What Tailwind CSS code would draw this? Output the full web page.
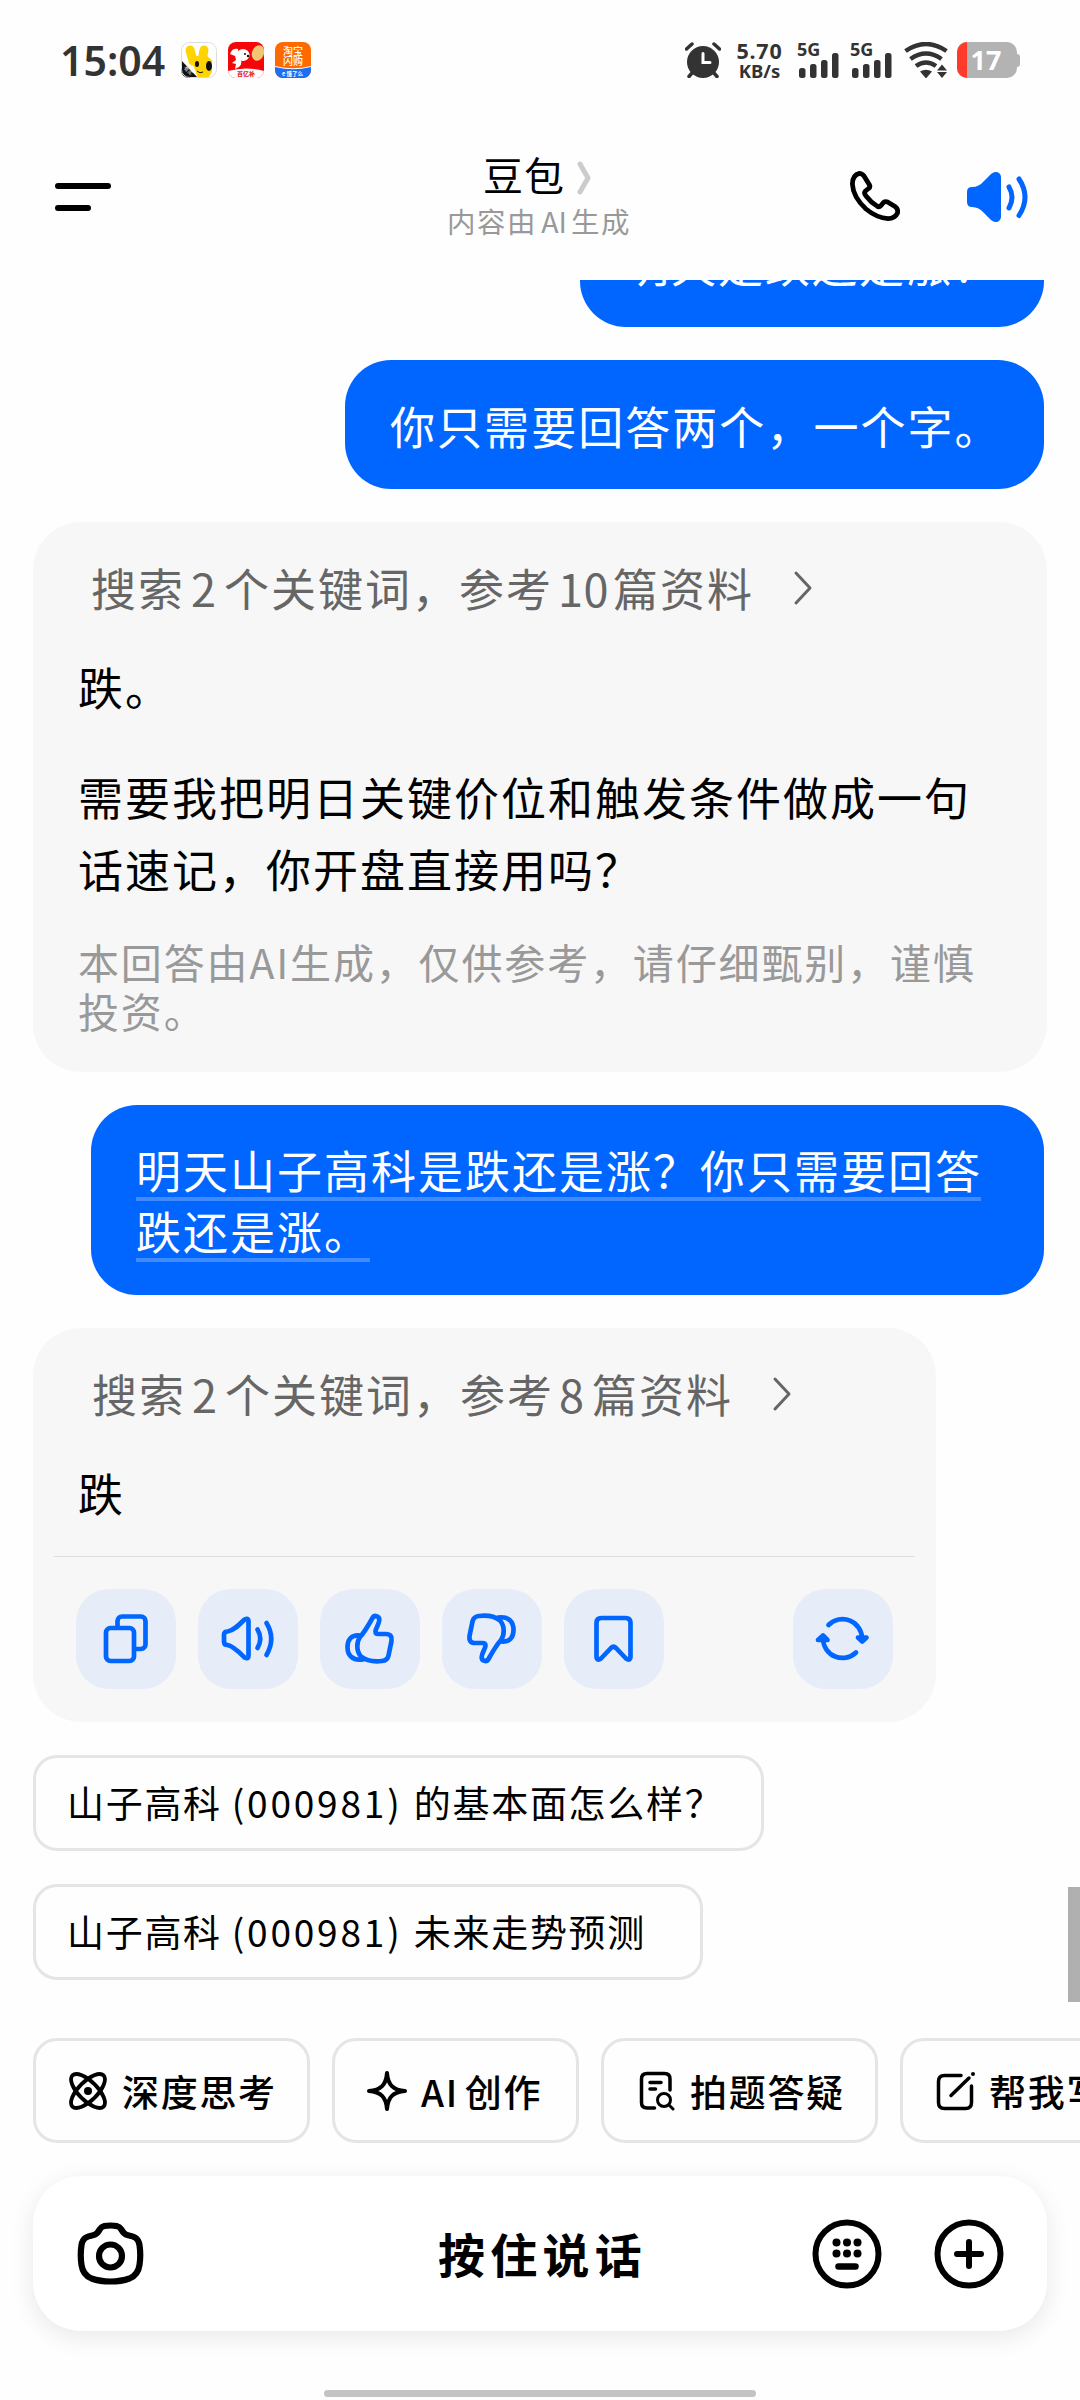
<!DOCTYPE html>
<html lang="zh-CN">
  <head>
    <meta charset="UTF-8" />
    <meta name="viewport" content="width=device-width, initial-scale=1.0" />
    <title>豆包</title>
    <script src="https://cdn.jsdelivr.net/npm/@tailwindcss/browser@4"></script>
    <style>
      body {
        font-family: 'Noto Sans CJK SC', sans-serif;
      }
    </style>
  </head>
  <body class="bg-white">
    <div class="w-[1080px] h-[2400px] relative overflow-hidden flex flex-col bg-[#fefefe] text-black">
      <!-- Status bar -->
      <div class="h-[120px] shrink-0 pl-[60px] pr-[60px] flex items-center justify-between text-[#333]">
        <div class="flex items-center">
          <span class="w-[121px] text-[41px] leading-[36px] font-[600] font-['Noto_Sans','Open_Sans',sans-serif] whitespace-nowrap">15:04</span>
          <div class="flex gap-[11px]">
            <svg class="w-9 h-9" viewBox="0 0 36 36">
              <defs><clipPath id="app"><rect width="36" height="36" rx="8" /></clipPath></defs>
              <g clip-path="url(#app)">
                <rect width="36" height="36" fill="#fff" />
                <path d="M7 14 L13 25 L17 36 H27 L31 30 V18 L26 14 Z" fill="#ffd400" />
                <path d="M9 8 L12 19 M23 8 L21 19" stroke="#ffd400" stroke-width="9" stroke-linecap="round" />
                <ellipse cx="28" cy="24" rx="3" ry="5" fill="#111" />
                <ellipse cx="16" cy="22" rx="2" ry="3" fill="#111" />
                <path d="M16 29 q3 3 6 1" stroke="#111" stroke-width="1" fill="none" />
                <path d="M0 18 L17 36 H0 Z" fill="#111" />
                <text x="2" y="28" font-size="5" fill="#fff" transform="rotate(45 4 28)">有买</text>
              </g>
              <rect x=".5" y=".5" width="35" height="35" rx="8" fill="none" stroke="#ddd" />
            </svg>
            <svg class="w-9 h-9" viewBox="0 0 36 36">
              <g clip-path="url(#app)">
                <rect width="36" height="36" fill="#f5060a" />
                <ellipse cx="30" cy="11" rx="6" ry="8" transform="rotate(20 30 11)" fill="#f3c474" />
                <ellipse cx="15" cy="13" rx="6.500" ry="6" fill="#fff" />
                <path d="M2 12 q2-6 8-5 l1 9 q5 4 0 9 l-4 2 1-5 -4-1 4-3 -1-4 z" fill="#fff" />
                <circle cx="17" cy="12" r="1" fill="#111" />
                <circle cx="20" cy="14" r="1.200" fill="#111" />
                <path d="M0 29 Q18 24 36 29 V36 H0 Z" fill="#fff" />
                <text x="9" y="33.500" font-size="6" font-weight="900" fill="#e1251b">百亿补</text>
              </g>
            </svg>
            <svg class="w-9 h-9" viewBox="0 0 36 36">
              <g clip-path="url(#app)">
                <rect width="36" height="36" fill="#ff6a00" />
                <text x="8" y="12.500" font-size="10" font-weight="500" fill="#fff">淘宝</text>
                <text x="8" y="23" font-size="10" font-weight="500" fill="#fff">闪购</text>
                <path d="M0 24.500 Q18 29 36 24.500 V36 H0 Z" fill="#1c6ef2" />
                <path d="M0 24.500 Q18 29 36 24.500" stroke="#fff" fill="none" />
                <text x="7" y="33.500" font-size="5.500" font-weight="700" fill="#fff">e 饿了么</text>
              </g>
            </svg>
          </div>
        </div>
        <div class="flex items-center">
          <svg class="w-9 h-9 mr-[15px]" viewBox="0 0 36 36" fill="none" stroke="#333" stroke-linecap="round">
            <circle cx="18" cy="20" r="16" fill="#333" stroke="none" />
            <path d="M1.500 7 L7 2 M34.500 7 L29 2" stroke-width="3.500" />
            <path d="M7 31 L4 34.500 M29 31 L32 34.500" stroke-width="3.500" />
            <path d="M18 11.500 V20.500 H25" stroke="#fff" stroke-width="3" />
          </svg>
          <div class="w-[47px] mr-[14px] text-center font-bold font-['Noto_Sans','Open_Sans',sans-serif]">
            <div class="text-[21.500px] leading-[21px] tracking-[0.800px]">5.70</div>
            <div class="text-[18.500px] leading-[20px]">KB/s</div>
          </div>
          <svg class="w-[42px] h-[38px] mr-[11px] overflow-visible" viewBox="0 0 42 38" fill="#333">
            <text x="0" y="15" font-size="18" font-weight="700" font-family="Noto Sans">5G</text>
            <rect x="2" y="27" width="6.500" height="10" rx="2.500" />
            <rect x="13" y="23" width="6.500" height="14" rx="2.500" />
            <rect x="24" y="19" width="6.500" height="18" rx="2.500" />
            <rect x="35" y="12" width="6.500" height="25" rx="2.500" />
          </svg>
          <svg class="w-[42px] h-[38px] mr-[12px] overflow-visible" viewBox="0 0 42 38" fill="#333">
            <text x="0" y="15" font-size="18" font-weight="700" font-family="Noto Sans">5G</text>
            <rect x="2" y="27" width="6.500" height="10" rx="2.500" />
            <rect x="13" y="23" width="6.500" height="14" rx="2.500" />
            <rect x="24" y="19" width="6.500" height="18" rx="2.500" />
            <rect x="35" y="12" width="6.500" height="25" rx="2.500" />
          </svg>
          <svg class="w-11 h-9 mr-[9px]" viewBox="0 0 44 36" fill="none" stroke="#333" stroke-width="4.500">
            <path d="M1.500 9 Q22 -5 42.500 9" />
            <path d="M6.500 17 Q22 6 37.500 17" />
            <path d="M12 24 Q22 17 32 24" />
            <path d="M16 29.500 Q22 26 28 29.500 L22 36.500 Z" fill="#333" stroke="none" />
            <path d="M38 22.500 l5 6 h-10 z M38 36 l5-6 h-10 z" fill="#333" stroke="none" />
          </svg>
          <div class="w-[60px] h-9 rounded-[10px] bg-[#b3b3b3] relative overflow-hidden">
            <div class="w-[10px] h-9 bg-[#ff3b2c]"></div>
            <span class="absolute inset-0 pr-[2px] text-center text-white font-bold text-[27px] leading-[36px] font-['Noto_Sans',sans-serif]">17</span>
          </div>
          <div class="w-[3px] h-[13px] rounded-r-[3px] bg-[#b3b3b3]"></div>
        </div>
      </div>

      <!-- Header -->
      <div class="h-[160px] shrink-0 pl-[55px] pr-[52px] flex relative">
        <svg class="w-14 h-7 mt-[63px]" viewBox="0 0 56 28" stroke="#000" stroke-width="6" stroke-linecap="round">
          <path d="M3 3 H53 M3 25 H33" />
        </svg>
        <div class="absolute left-0 right-[6px] top-[29px] flex flex-col items-center">
          <div class="flex items-center">
            <span class="text-[40px] leading-[50px] tracking-[1px]">豆包</span>
            <svg class="w-[14px] h-[34px] ml-[12px] mt-[7px]" viewBox="0 0 14 34" fill="none" stroke="#ccc" stroke-width="5" stroke-linecap="round" stroke-linejoin="round">
              <path d="M3 3 L11 17 L3 31" />
            </svg>
          </div>
          <div class="pl-1 mt-[2px] text-[28.500px] leading-[40px] tracking-[1.600px] text-[#999]"><span>内容由</span><span class="mx-1 tracking-normal">AI</span><span>生成</span></div>
        </div>
        <svg class="w-[50px] h-[50px] ml-auto mt-[51px]" viewBox="0 0 50 50" fill="none" stroke="#000" stroke-width="4.800" stroke-linejoin="round">
          <path d="M9.500 2.400 Q12 2.400 14 5 L19.500 14 Q20.500 16 18.500 17.500 L15.500 20 Q13.500 22 16 25 Q21 31.500 27 35 Q29 36.500 31 34.500 L33.500 31.500 Q35.500 30 38 31.200 L45 35.500 Q48.500 38 47.500 42 Q45 47.500 38 47.600 Q27 47 16 38 Q3 26 2.400 13 Q2.500 4 9.500 2.400 Z" />
        </svg>
        <svg class="w-[61px] h-[50px] ml-[67px] mt-[52px]" viewBox="0 0 61 50" fill="none" stroke="#06f" stroke-width="5" stroke-linecap="round">
          <path d="M0 20 Q0 15 5 15 Q12 15 17 9 L24 2 Q28 -1.500 32 1 Q34 2.500 34 5 V45 Q34 47.500 32 49 Q28 51.500 24 48 L17 41 Q12 35 5 35 Q0 35 0 30 Z" fill="#06f" stroke="none" />
          <path d="M42 15 Q48 25 42 36 M52 7 Q64 25 52 43.500" />
        </svg>
      </div>

      <!-- Chat -->
      <div class="flex flex-col items-start pl-[33px] pr-[36px]">
        <div class="h-[47px] self-end flex items-end overflow-hidden">
          <div class="w-[464px] h-[129px] px-[44px] pt-[36px] rounded-[46px] bg-[#06f] text-white text-[45px] leading-[60px] tracking-[2px] whitespace-nowrap">明天是跌还是涨？</div>
        </div>
        <div class="w-[699px] h-[129px] mt-[33px] px-[45px] pt-[36px] self-end rounded-[46px] bg-[#06f] text-white text-[45px] leading-[60px] tracking-[2.050px] whitespace-nowrap">你只需要回答两个，一个字。</div>

        <div class="w-[1014px] h-[550px] mt-[33px] pt-9 rounded-[48px] bg-[#f7f7f7] text-[45px] tracking-[2px] whitespace-nowrap">
          <div class="pl-[58px] flex items-center leading-[60px] text-[#666]">
            <span>搜索</span><span class="mx-[6px]">2</span><span>个关键词，参考</span><span class="ml-[5px] mr-[4px] tracking-[0.500px]">10</span><span>篇资料</span>
            <svg class="w-5 h-9 ml-[39px]" viewBox="0 0 20 36" fill="none" stroke="#666" stroke-width="3" stroke-linecap="round" stroke-linejoin="round">
              <path d="M3 3 L17 18 L3 33" />
            </svg>
          </div>
          <p class="pl-[45px] mt-[33px] leading-[72px]">跌。</p>
          <p class="pl-[45px] mt-[38px] leading-[72px]">需要我把明日关键价位和触发条件做成一句<br />话速记，你开盘直接用吗？</p>
          <p class="pl-[45px] mt-[32px] text-[41px] leading-[49px] tracking-[1.850px] text-[#999]">本回答由AI生成，仅供参考，请仔细甄别，谨慎<br />投资。</p>
        </div>

        <div class="w-[953px] h-[190px] mt-[33px] pl-[45px] pt-[34px] self-end rounded-[46px] bg-[#06f] text-white text-[45px] leading-[61px] tracking-[2px] whitespace-nowrap">
          <div class="w-[845px] h-[61px] relative">明天山子高科是跌还是涨？你只需要回答<div class="absolute left-0 right-0 top-[58px] h-1 bg-[#408cff]"></div></div>
          <div class="w-[234px] h-[61px] relative">跌还是涨。<div class="absolute left-0 right-0 top-[58px] h-1 bg-[#408cff]"></div></div>
        </div>

        <div class="w-[903px] h-[394px] mt-[33px] pt-9 rounded-[48px] bg-[#f7f7f7] text-[45px] tracking-[2px] whitespace-nowrap">
          <div class="pl-[59px] flex items-center leading-[60px] text-[#666]">
            <span>搜索</span><span class="mx-[6px]">2</span><span>个关键词，参考</span><span class="ml-[5px] mr-[6px]">8</span><span>篇资料</span>
            <svg class="w-5 h-9 ml-[39px]" viewBox="0 0 20 36" fill="none" stroke="#666" stroke-width="3" stroke-linecap="round" stroke-linejoin="round">
              <path d="M3 3 L17 18 L3 33" />
            </svg>
          </div>
          <p class="pl-[45px] mt-[33px] leading-[72px]">跌</p>
          <div class="mx-[21px] mt-[27px] h-px bg-[#ddd]"></div>
          <div class="mt-[32px] pl-[43px] pr-[43px] flex gap-[22px]">
            <svg class="w-[100px] h-[100px] rounded-[33px] bg-[#e6edf8]" viewBox="0 0 100 100" fill="none" stroke="#06f" stroke-width="4.700" stroke-linecap="round" stroke-linejoin="round">
              <rect x="30" y="39" width="28" height="33" rx="4.500" />
              <path d="M41.500 37 V32 a4.500 4.500 0 0 1 4.500 -4.500 H65 a4.500 4.500 0 0 1 4.500 4.500 V55.500 a4.500 4.500 0 0 1 -4.500 4.500 H60" />
            </svg>
            <svg class="w-[100px] h-[100px] rounded-[33px] bg-[#e6edf8]" viewBox="0 0 100 100" fill="none" stroke="#06f" stroke-width="4.700" stroke-linecap="round" stroke-linejoin="round">
              <path d="M26 46 Q26 42.500 29.500 42.500 C36 41.500 41 36 46.500 30.500 Q50.500 28.500 50.500 32 V67 Q50.500 70.500 46.500 68.500 C41 63 36 57.500 29.500 56 Q26 56 26 52.500 Z" />
              <path d="M59.500 40.500 Q65 49.500 59.500 59 M68.500 34 Q78 49.500 68.500 66" />
            </svg>
            <svg class="w-[100px] h-[100px] rounded-[33px] bg-[#e6edf8]" viewBox="0 0 100 100" fill="none" stroke="#06f" stroke-width="4.700" stroke-linecap="round" stroke-linejoin="round">
              <path d="M52.500 29 C54.500 25.500 59.500 27 59.300 31 C59 36 55.500 39 55.500 42.500 Q55.500 45 58.500 45 H66 Q72.500 45 71.500 52 L68.500 66.500 Q67.500 71.500 62 72 C53 73 46 71.500 41 67.500 C36 62 36.500 53 40 48 C45 42.500 48.500 36 52.500 29 Z" />
              <path d="M40 46.500 C31 45.500 27.500 51 27.500 58 C27.500 66 32 72 43 70.500" />
            </svg>
            <svg class="w-[100px] h-[100px] rounded-[33px] bg-[#e6edf8]" viewBox="0 0 100 100" fill="none" stroke="#06f" stroke-width="4.700" stroke-linecap="round" stroke-linejoin="round">
              <g transform="rotate(180 49.500 49.500)">
                <path d="M52.500 29 C54.500 25.500 59.500 27 59.300 31 C59 36 55.500 39 55.500 42.500 Q55.500 45 58.500 45 H66 Q72.500 45 71.500 52 L68.500 66.500 Q67.500 71.500 62 72 C53 73 46 71.500 41 67.500 C36 62 36.500 53 40 48 C45 42.500 48.500 36 52.500 29 Z" />
                <path d="M40 46.500 C31 45.500 27.500 51 27.500 58 C27.500 66 32 72 43 70.500" />
              </g>
            </svg>
            <svg class="w-[100px] h-[100px] rounded-[33px] bg-[#e6edf8]" viewBox="0 0 100 100" fill="none" stroke="#06f" stroke-width="4.700" stroke-linecap="round" stroke-linejoin="round">
              <path d="M32.500 34 Q32.500 29 37.500 29 H61.500 Q66.500 29 66.500 34 V67 Q66.500 72.500 62 69.500 L52 59 Q49.500 56.500 47 59 L37 69.500 Q32.500 72.500 32.500 67 Z" />
            </svg>
            <svg class="w-[100px] h-[100px] rounded-[33px] bg-[#e6edf8] ml-auto" viewBox="0 0 100 100" fill="none" stroke="#06f" stroke-width="4.700" stroke-linecap="round" stroke-linejoin="round">
              <path d="M35.500 36 A19.500 19.500 0 0 1 69 50" />
              <path d="M63 63.500 A19.500 19.500 0 0 1 30 50" />
              <path d="M65 48.500 L69.200 52.500 L73.500 48.500 Z M25 51 L30 46.500 L34.500 51 Z" fill="#06f" />
            </svg>
          </div>
        </div>

        <!-- Suggested questions -->
        <div class="w-[731px] h-24 mt-[33px] pl-[31px] border-3 border-[#e5e5e5] rounded-3xl text-[37px] leading-[88px] tracking-[1.700px] whitespace-nowrap flex">
          <span>山子高科</span><span class="w-[192px] pl-[10px] tracking-[2.800px]">(000981)</span><span>的基本面怎么样？</span>
        </div>
        <div class="w-[670px] h-24 mt-[33px] pl-[31px] border-3 border-[#e5e5e5] rounded-3xl text-[37px] leading-[88px] tracking-[1.700px] whitespace-nowrap flex">
          <span>山子高科</span><span class="w-[192px] pl-[10px] tracking-[2.800px]">(000981)</span><span>未来走势预测</span>
        </div>
      </div>
      <div class="absolute right-0 top-[1887px] w-3 h-[115px] bg-[#b0b0b0]"></div>

      <!-- Quick actions -->
      <div class="mt-[58px] pl-[33px] flex gap-[22px] shrink-0 text-[37px] leading-[96px] tracking-[1.700px] font-medium whitespace-nowrap">
        <div class="w-[277px] h-[105px] shrink-0 pl-8 border-3 border-[#e5e5e5] rounded-3xl flex items-center">
          <svg class="w-10 h-10 mr-[14px]" viewBox="0 0 40 40" fill="none" stroke="#000" stroke-width="3.800">
            <ellipse cx="20" cy="20" rx="9.500" ry="22" transform="rotate(45 20 20)" />
            <ellipse cx="20" cy="20" rx="9.500" ry="22" transform="rotate(-45 20 20)" />
            <circle cx="20" cy="20" r="4" fill="#000" stroke="none" />
          </svg>
          <span>深度思考</span>
        </div>
        <div class="w-[247px] h-[105px] shrink-0 pl-8 border-3 border-[#e5e5e5] rounded-3xl flex items-center">
          <svg class="w-10 h-10 mr-[14px]" viewBox="0 0 40 40" fill="none" stroke="#000" stroke-width="4" stroke-linejoin="round">
            <path d="M20 2 C21 14 26 19 38 20 C26 21 21 26 20 38 C19 26 14 21 2 20 C14 19 19 14 20 2 Z" />
          </svg>
          <span>AI</span><span class="ml-[6px]">创作</span>
        </div>
        <div class="w-[277px] h-[105px] shrink-0 pl-8 border-3 border-[#e5e5e5] rounded-3xl flex items-center">
          <svg class="w-10 h-10 mr-[14px]" viewBox="0 0 40 40" fill="none" stroke="#000" stroke-width="3.500" stroke-linecap="round">
            <path d="M18.500 37 H11 Q5.500 37 5.500 31.500 V8 Q5.500 2.500 11 2.500 H28.500 Q34 2.500 34 8 V19" />
            <path d="M14 11.500 H25 M14 18 H19.500" />
            <circle cx="28" cy="29" r="6.500" stroke-width="3" />
            <path d="M33 34 L37 38" stroke-width="3" />
          </svg>
          <span>拍题答疑</span>
        </div>
        <div class="w-[277px] h-[105px] shrink-0 pl-8 border-3 border-[#e5e5e5] rounded-3xl flex items-center">
          <svg class="w-10 h-10 mr-[14px]" viewBox="0 0 40 40" fill="none" stroke="#000" stroke-width="3.500" stroke-linecap="round">
            <path d="M26 4.500 H9.500 Q3.500 4.500 3.500 10.500 V31.500 Q3.500 37.500 9.500 37.500 H30.500 Q36.500 37.500 36.500 31.500 V15" />
            <path d="M16 24.500 L34 7" />
            <circle cx="38" cy="3" r="2" fill="#000" stroke="none" />
          </svg>
          <span>帮我写作</span>
        </div>
      </div>

      <!-- Input bar -->
      <div class="w-[1014px] h-[155px] shrink-0 mt-[33px] ml-[33px] pl-[44px] pr-[43px] rounded-[48px] bg-white shadow-[0_6px_24px_rgba(0,0,0,0.09)] flex items-center relative">
        <svg class="w-[67px] h-[63px]" viewBox="0 0 67 63" fill="none" stroke="#000" stroke-width="6.200" stroke-linejoin="round">
          <path d="M33.500 3.500 C38 3.500 42 3.500 44 7 C46.500 11 47.500 12.500 51 13.200 C58 14.500 61.500 16.500 62.500 23 Q64 33 62.500 43 C61.500 50 58.500 54 52.500 56.500 Q44 59.500 33.500 59.500 Q23 59.500 14.500 56.500 C8.500 54 5.500 50 4.500 43 Q3 33 4.500 23 C5.500 16.500 9 14.500 16 13.200 C19.500 12.500 20.500 11 23 7 C25 3.500 29 3.500 33.500 3.500 Z" />
          <circle cx="33.500" cy="34" r="11.500" />
        </svg>
        <div class="absolute inset-x-0 top-[45px] text-center text-[47px] leading-[64px] tracking-[5.300px] font-bold pl-[5px]">按住说话</div>
        <svg class="w-[70px] h-[70px] ml-auto" viewBox="0 0 70 70" fill="none" stroke="#000" stroke-width="6" stroke-linecap="round">
          <circle cx="35" cy="35" r="31.500" />
          <path d="M26.500 47.500 H43.500" stroke-width="6.500" />
          <g fill="#000" stroke="none">
            <circle cx="24.500" cy="23.500" r="4" /><circle cx="35" cy="23.500" r="4" /><circle cx="45.500" cy="23.500" r="4" />
            <circle cx="24.500" cy="34.500" r="4" /><circle cx="35" cy="34.500" r="4" /><circle cx="45.500" cy="34.500" r="4" />
          </g>
        </svg>
        <svg class="w-[70px] h-[70px] ml-[52px]" viewBox="0 0 70 70" fill="none" stroke="#000" stroke-width="6" stroke-linecap="round">
          <circle cx="35" cy="35" r="31.500" />
          <path d="M35 23 V47 M23 35 H47" />
        </svg>
      </div>

      <div class="w-[432px] h-[7px] mt-[59px] mx-auto rounded-full bg-[#c3c3c3]"></div>
    </div>
  </body>
</html>
